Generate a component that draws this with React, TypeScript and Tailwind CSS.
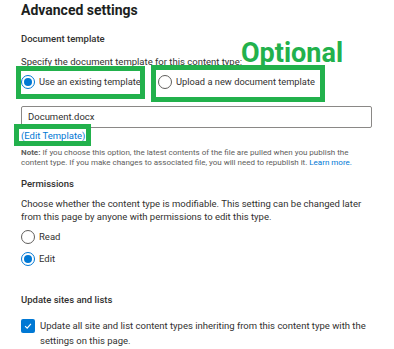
import React from 'react';

const font = { fontFamily: 'Roboto, "Noto Sans", sans-serif' };

function Radio({ checked }: { checked?: boolean }) {
    return (
        <span
            className={`flex h-[14px] w-[14px] shrink-0 items-center justify-center rounded-full border ${checked ? 'border-[#0078d4]' : 'border-[#605e5c]'}`}
        >
            {checked && <span className="h-[8px] w-[8px] rounded-full bg-[#0078d4]" />}
        </span>
    );
}

export default function App() {
    return (
        <div className="relative h-[349px] w-[394px] overflow-hidden bg-white text-[#323130]" style={font}>
            <div className="flex flex-col px-[21px] pt-[1px]">
                {/* Header */}
                <h1 className="h-[19px] text-[14px] font-bold leading-[19px] text-[#201f1e]">Advanced settings</h1>

                {/* Document template */}
                <h2 className="mt-[12px] h-[14px] text-[9.5px] font-medium leading-[14px]">Document template</h2>
                <p className="mt-[9px] h-[14px] text-[9.5px] leading-[14px]">Specify the document template for this content type:</p>

                <div className="mt-[6px] flex h-[14px] items-center">
                    <label className="flex w-[137px] items-center gap-[4px] text-[9.3px]">
                        <Radio checked />
                        <span>Use an existing template</span>
                    </label>
                    <label className="flex items-center gap-[4px] text-[9.3px]">
                        <Radio />
                        <span>Upload a new document template</span>
                    </label>
                </div>

                <div className="mt-[17px] flex h-[22px] w-[351px] items-center rounded-[2px] border border-[#8a8886] px-[6px] text-[9.5px]">
                    Document.docx
                </div>

                <a className="mt-[1px] h-[14px] text-[9.5px] leading-[14px] text-[#0078d4]">(Edit Template)</a>

                <p className="mt-[5px] w-[336px] text-[8px] leading-[10px] text-[#605e5c]">
                    <span className="font-bold">Note:</span> If you choose this option, the latest contents of the file are pulled when you publish the content type. If you make changes to associated file, you will need to republish it.{' '}
                    <span className="text-[#0078d4]">Learn more.</span>
                </p>

                {/* Permissions */}
                <h2 className="mt-[9px] h-[14px] text-[9.5px] font-medium leading-[14px]">Permissions</h2>
                <p className="mt-[6px] text-[9.5px] leading-[13px]">
                    Choose whether the content type is modifiable. This setting can be changed later from this page by anyone with permissions to edit this type.
                </p>
                <div className="mt-[7px] flex flex-col gap-[8px]">
                    <label className="flex h-[14px] items-center gap-[4px] text-[9.5px]">
                        <Radio />
                        <span>Read</span>
                    </label>
                    <label className="flex h-[14px] items-center gap-[4px] text-[9.5px]">
                        <Radio checked />
                        <span>Edit</span>
                    </label>
                </div>

                {/* Update sites and lists */}
                <h2 className="mt-[27px] h-[14px] text-[9.5px] font-medium leading-[14px]">Update sites and lists</h2>
                <label className="mt-[11px] flex items-start gap-[5px] text-[9.5px] leading-[15px]">
                    <span className="mt-[1px] flex h-[14px] w-[14px] shrink-0 items-center justify-center rounded-[2px] bg-[#0078d4]">
                        <svg viewBox="0 0 12 12" className="h-[10px] w-[10px]" fill="none" stroke="white" strokeWidth="1.4">
                            <path d="M2.5 6.2 L5 8.5 L9.5 3.5" />
                        </svg>
                    </span>
                    <span>Update all site and list content types inheriting from this content type with the settings on this page.</span>
                </label>
            </div>

            {/* Annotations */}
            <div className="absolute left-[16px] top-[66px] h-[33px] w-[129px] border-[5px] border-[#22b14c]" />
            <div className="absolute left-[151px] top-[65px] h-[37px] w-[174px] border-[5px] border-[#22b14c]" />
            <div className="absolute left-[14px] top-[124px] h-[22px] w-[77px] border-[5px] border-[#22b14c]" />
            <div className="absolute left-[241px] top-[38px] text-[27px] font-bold leading-[30px] text-[#22b14c]">Optional</div>
        </div>
    );
}
